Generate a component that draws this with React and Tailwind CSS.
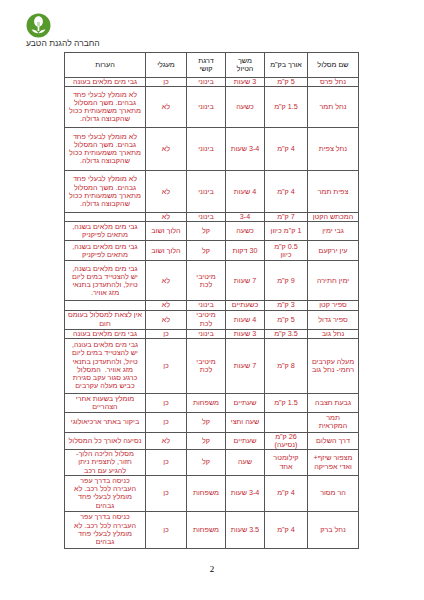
const KM = 'ק"מ';

const rows = [
  { name: "נחל פרס", len: `5 ${KM}`, dur: "3 שעות", diff: "בינוני", circ: "כן", notes: "גבי מים מלאים בעונה", h: "h-[8px]" },
  { name: "נחל תמר", len: `1.5 ${KM}`, dur: "כשעה", diff: "בינוני", circ: "לא", notes: "לא מומלץ לבעלי פחד\nגבהים. משך המסלול\nמתארך משמעותית ככול\nשהקבוצה גדולה.", h: "h-[41px]" },
  { name: "נחל צפית", len: `4 ${KM}`, dur: "3-4 שעות", diff: "בינוני", circ: "לא", notes: "לא מומלץ לבעלי פחד\nגבהים. משך המסלול\nמתארך משמעותית ככול\nשהקבוצה גדולה.", h: "h-[43px]" },
  { name: "צפית תמר", len: `4 ${KM}`, dur: "4 שעות", diff: "בינוני", circ: "לא", notes: "לא מומלץ לבעלי פחד\nגבהים. משך המסלול\nמתארך משמעותית ככול\nשהקבוצה גדולה.", h: "h-[42px]" },
  { name: "המכתש הקטן", len: `7 ${KM}`, dur: "3-4", diff: "בינוני", circ: "לא", notes: "", h: "h-[8px]" },
  { name: "גבי ימין", len: `1 ${KM} כיוון`, dur: "כשעה", diff: "קל", circ: "הלוך ושוב", notes: "גבי מים מלאים בשנה,\nמתאים לפיקניק", h: "h-[19px]" },
  { name: "עין ירקעם", len: `0.5 ${KM}\nכיוון`, dur: "30 דקות", diff: "קל", circ: "הלוך ושוב", notes: "גבי מים מלאים בשנה,\nמתאים לפיקניק", h: "h-[20px]" },
  { name: "ימין חתירה", len: `9 ${KM}`, dur: "7 שעות", diff: "מיטיבי\nלכת", circ: "לא", notes: "גבי מים מלאים בשנה,\nיש להצטייד במים ליום\nטיול, ולהתעדכן בתנאי\nמזג אוויר.", h: "h-[40px]" },
  { name: "ספיר קטן", len: `3 ${KM}`, dur: "כשעתיים", diff: "בינוני", circ: "לא", notes: "", h: "h-[8px]" },
  { name: "ספיר גדול", len: `5 ${KM}`, dur: "4 שעות", diff: "מיטיבי\nלכת", circ: "לא", notes: "אין לצאת למסלול בעומס\nחום", h: "h-[19px]" },
  { name: "נחל גוב", len: `3.5 ${KM}`, dur: "3 שעות", diff: "בינוני", circ: "כן", notes: "גבי מים מלאים בעונה", h: "h-[8px]" },
  { name: "מעלה עקרבים\nרחמי- נחל גוב", len: `8 ${KM}`, dur: "7 שעות", diff: "מיטיבי\nלכת", circ: "כן", notes: "גבי מים מלאים בעונה,\nיש להצטייד במים ליום\nטיול, ולהתעדכן בתנאי\nמזג אוויר.  המסלול\nכרגע סגור עקב סגירת\nכביש מעלה עקרבים", h: "h-[55px]" },
  { name: "גבעת חצבה", len: `1.5 ${KM}`, dur: "שעתיים", diff: "משפחות", circ: "כן", notes: "מומלץ בשעות אחרי\nהצהריים", h: "h-[19px]" },
  { name: "תמר\nהמקראית", len: "", dur: "שעה וחצי", diff: "קל", circ: "כן", notes: "ביקור באתר ארכיאולוגי", h: "h-[20px]" },
  { name: "דרך השלום", len: `26 ${KM}\n(נסיעה)`, dur: "שעתיים", diff: "קל", circ: "לא", notes: "נסיעה לאורך כל המסלול", h: "h-[17px]" },
  { name: "מצפור שיזף+\nואדי אפריקה", len: "קילומטר\nאחד", dur: "שעה", diff: "קל", circ: "כן", notes: "מסלול הליכה הלוך-\nחזור, לתצפית ניתן\nלהגיע עם רכב", h: "h-[25px]" },
  { name: "הר מסור", len: `4 ${KM}`, dur: "3-4 שעות", diff: "משפחות", circ: "כן", notes: "כניסה בדרך עפר\nהעבירה לכל רכב. לא\nמומלץ לבעלי פחד\nגבהים", h: "h-[36px]" },
  { name: "נחל ברק", len: `4 ${KM}`, dur: "3.5 שעות", diff: "משפחות", circ: "כן", notes: "כניסה בדרך עפר\nהעבירה לכל רכב. לא\nמומלץ לבעלי פחד\nגבהים", h: "h-[37px]" },
];

const Logo = () => (
  <div className="pl-[26px] pt-[13px]">
    <svg width="25" height="25" viewBox="0 0 24 24">
      <circle cx="12" cy="12" r="11.5" fill="#569a2c" />
      <path d="M12 3.2c-2.6 0-4.2 2.4-4.2 5.2 0 2.4 1.5 4.2 3.4 4.7v4.3h1.6v-4.3c1.9-.5 3.4-2.3 3.4-4.7 0-2.8-1.6-5.2-4.2-5.2z" fill="#fff" />
      <path d="M11.4 8.5v4.2M12.6 8.5v4.2" stroke="#569a2c" strokeWidth="0.5" />
      <path d="M12 19.5c-1.2-2.2-3.6-3.4-6.6-3.6 1 2 3.4 3.6 6.6 3.6zM12 19.5c1.2-2.2 3.6-3.4 6.6-3.6-1 2-3.4 3.6-6.6 3.6z" fill="#fff" />
    </svg>
    <div className="mt-[1px] text-[8.5px] leading-[9px] text-[#333] whitespace-nowrap">
      <span dir="rtl">החברה להגנת הטבע</span>
    </div>
  </div>
);

const Cell = ({ children }) => (
  <td className="border border-[#555] px-[2px] py-0 text-center align-middle whitespace-pre">
    {children}
  </td>
);

export default function App() {
  return (
    <div className="min-h-[600px] bg-white font-['Liberation_Sans','DejaVu_Sans',sans-serif]">
      <Logo />
      <div className="ml-[64px] mt-[4px] w-[294px]">
        <table dir="rtl" className="w-[294px] table-fixed border-collapse border-[1.5px] border-[#444] text-[7.2px] leading-[8.2px]">
          <colgroup>
            <col className="w-[51px]" />
            <col className="w-[43px]" />
            <col className="w-[39px]" />
            <col className="w-[39px]" />
            <col className="w-[41px]" />
            <col className="w-[81px]" />
          </colgroup>
          <thead>
            <tr className="h-[25px] text-[#111]">
              <Cell>שם מסלול</Cell>
              <Cell>אורך בק"מ</Cell>
              <Cell>{"משך\nהטיול"}</Cell>
              <Cell>{"דרגת\nקושי"}</Cell>
              <Cell>מעגלי</Cell>
              <Cell>הערות</Cell>
            </tr>
          </thead>
          <tbody className="text-[#c4282f]">
            {rows.map((r, i) => (
              <tr key={i} className={r.h}>
                <Cell>{r.name}</Cell>
                <Cell>{r.len}</Cell>
                <Cell>{r.dur}</Cell>
                <Cell>{r.diff}</Cell>
                <Cell>{r.circ}</Cell>
                <Cell>{r.notes}</Cell>
              </tr>
            ))}
          </tbody>
        </table>
      </div>
      <div className="mt-[15px] text-center text-[9px] leading-[10px] text-black font-['Liberation_Serif',serif]">
        2
      </div>
    </div>
  );
}
